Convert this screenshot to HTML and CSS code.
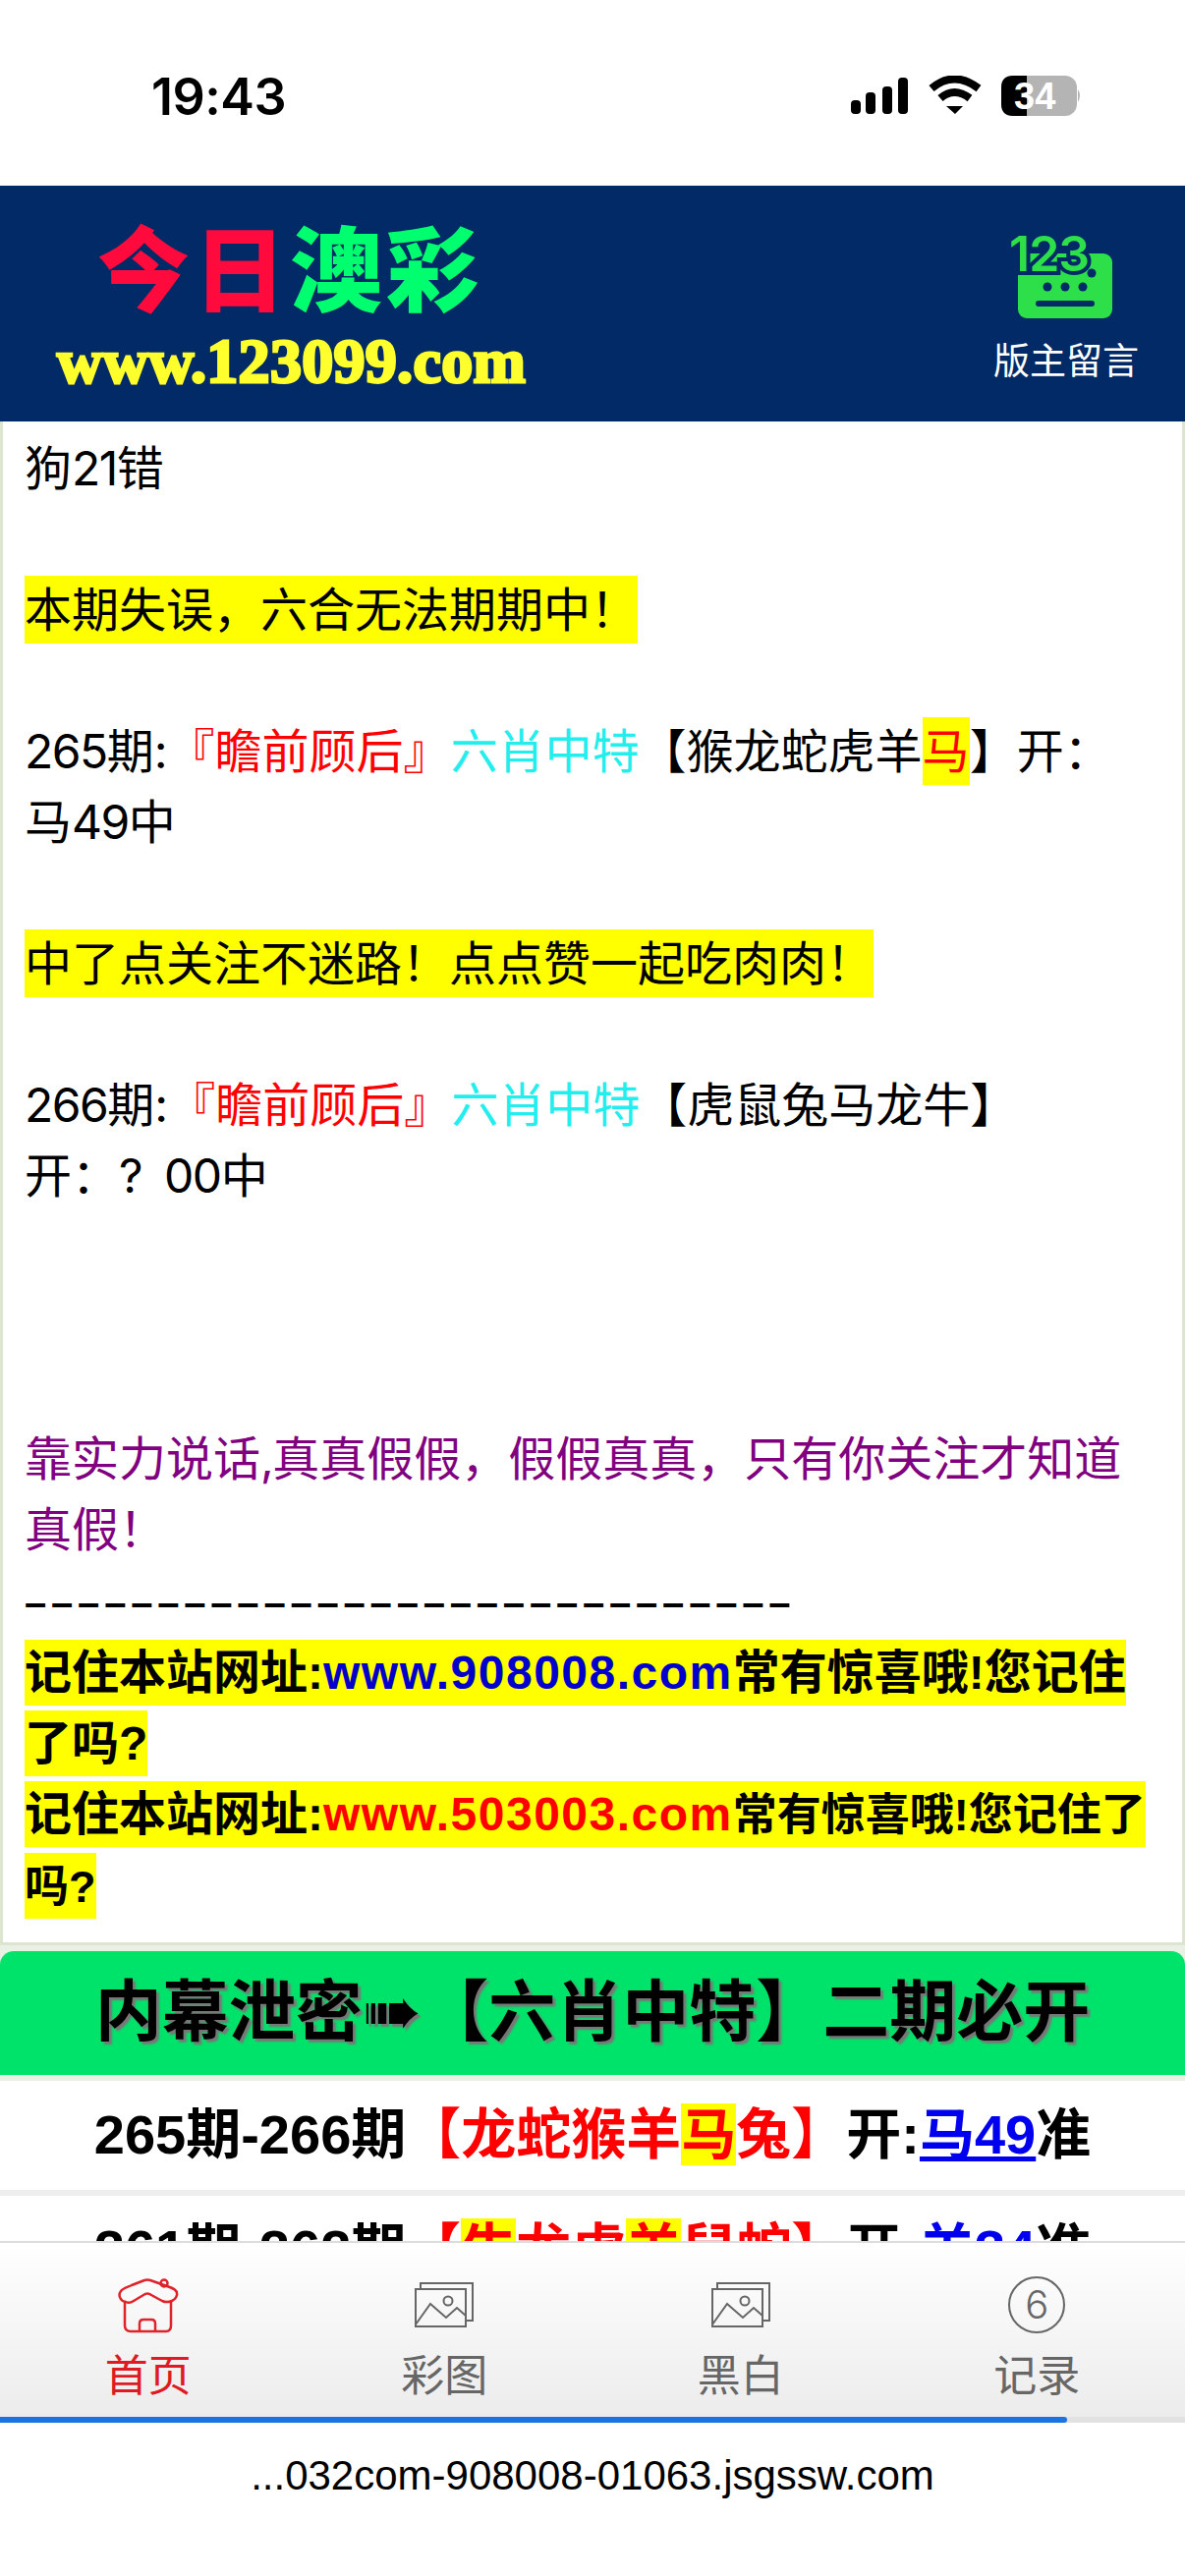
FILE: index.html
```html
<!doctype html>
<html lang="zh-CN">
<head>
    <meta charset="UTF-8">
    <title>今日澳彩</title>
    <link rel="stylesheet" href="styles.css">
</head>
<body>
<div class="status">
    <div class="time">19:43</div>
    <svg class="status-icons" width="236" height="44" viewBox="0 0 236 44">
        <rect x="1" y="25" width="10" height="14" rx="4" fill="#000"/>
        <rect x="16" y="17" width="10" height="22" rx="4" fill="#000"/>
        <rect x="33" y="11" width="10" height="28" rx="4" fill="#000"/>
        <rect x="49" y="2" width="10" height="37" rx="4" fill="#000"/>
        <path d="M83 13 Q106 -6 131 13 M92 23 Q106 11 122 23" fill="none" stroke="#000" stroke-width="8"/>
        <path d="M98 31 L115 31 L107 39 Z" fill="#000"/>
        <rect x="154" y="0" width="77" height="41" rx="12" fill="#b4b4b4"/>
        <path d="M166 0 H180 V41 H166 Q154 41 154 29 V12 Q154 0 166 0 Z" fill="#000"/>
        <path d="M232 14 Q236 20 232 27 Z" fill="#b4b4b4"/>
        <text x="167" y="34" class="batt">34</text>
    </svg>
</div>

<div class="header">
    <div class="logo">
        <div class="logo-name"><span class="logo-red">今日</span><span class="logo-green">澳彩</span></div>
        <div class="logo-url">www.123099.com</div>
    </div>
    <div class="board">
        <svg width="110" height="88" viewBox="0 0 110 88">
            <rect x="10" y="20" width="96" height="66" rx="9" fill="#2de04a"/>
            <circle cx="40" cy="54" r="4.500" fill="#012a66"/>
            <circle cx="58" cy="54" r="4.500" fill="#012a66"/>
            <circle cx="76" cy="54" r="4.500" fill="#012a66"/>
            <circle cx="85" cy="40" r="4.500" fill="#012a66"/>
            <rect x="28" y="68" width="60" height="6" rx="3" fill="#012a66"/>
            <text x="1" y="38" class="board-num">123</text>
        </svg>
        <div class="board-label">版主留言</div>
    </div>
</div>

<div class="main">
    <div class="post">
        狗<span class="num">21</span>错<br>
        <br>
        <span class="hl">本期失误，六合无法期期中！</span><br>
        <br>
        <span class="num">265</span>期:<span class="red">『瞻前顾后』</span><span class="cyan">六肖中特</span>【猴龙蛇虎羊<span class="hl red">马</span>】开：马<span class="num">49</span>中<br>
        <br>
        <span class="hl">中了点关注不迷路！点点赞一起吃肉肉！</span><br>
        <br>
        <span class="num">266</span>期:<span class="red">『瞻前顾后』</span><span class="cyan">六肖中特</span>【虎鼠兔马龙牛】<br>
        开：<span class="gap">?</span> <span class="num">00</span>中<br>
        <br>
        <br>
        <br>
        <span class="purple">靠实力说话<span class="num">,</span>真真假假，假假真真，只有你关注才知道真假！</span><br>
        <div class="note">
            <span class="dash">–––––––––––––––––––––––––––––</span><br>
            <span class="note-hl">记住本站网址:<span class="blue url-text">www.908008.com</span>常有惊喜哦!您记住了吗?</span><br>
            <span class="note-hl">记住本站网址:<span class="red url-text">www.503003.com</span><span class="tight">常有惊喜哦!您记住了吗?</span></span>
        </div>
    </div>
    <div class="banner">内幕泄密<span class="arrow">➠</span>【六肖中特】二期必开</div>
    <div class="row">265期-266期<span class="red">【龙蛇猴羊<span class="mark">马</span>兔】</span>开:<a class="link">马49</a>准</div>
    <div class="row">261期-262期<span class="red">【<span class="mark">牛</span>龙虎<span class="mark">羊</span>鼠蛇】</span>开:<a class="link">羊34</a>准</div>
</div>

<div class="tabs">
    <div class="tab active">
        <svg class="home" width="62" height="56" viewBox="0 0 62 56">
            <g fill="none" stroke="#e0222a" stroke-width="2.500" stroke-linejoin="round">
                <path d="M7 24 V48 Q7 54 13 54 H49 Q54 54 54 48 V24"/>
                <path d="M22 54 V46 Q22 42 26 42 H34 Q38 42 38 46 V54"/>
                <path d="M8 24 C2 23 0 17 3 13 C5 10 10 9 14 7 L27 2 Q30 1 33 2 L50 8 C56 10 61 12 60 17 C59 22 52 26 45 23 L34 17 Q30 14 26 17 L16 23 C13 25 10 25 8 24 Z"/>
                <circle cx="47" cy="5" r="3.500"/>
            </g>
        </svg>
        <span>首页</span>
    </div>
    <div class="tab">
        <svg width="60" height="46" viewBox="0 0 60 46">
            <g fill="none" stroke="#666" stroke-width="2">
                <path d="M6 7 V1 H59 V39 H52"/>
                <rect x="1" y="7" width="51" height="38"/>
                <path d="M1 43 L16 22 L32 36 L43 26 L52 34"/>
                <circle cx="34" cy="19" r="4.500"/>
            </g>
        </svg>
        <span>彩图</span>
    </div>
    <div class="tab">
        <svg width="60" height="46" viewBox="0 0 60 46">
            <g fill="none" stroke="#666" stroke-width="2">
                <path d="M6 7 V1 H59 V39 H52"/>
                <rect x="1" y="7" width="51" height="38"/>
                <path d="M1 43 L16 22 L32 36 L43 26 L52 34"/>
                <circle cx="34" cy="19" r="4.500"/>
            </g>
        </svg>
        <span>黑白</span>
    </div>
    <div class="tab">
        <div class="circle-six">6</div>
        <span>记录</span>
    </div>
</div>
<div class="progress"><div class="progress-bar"></div></div>
<div class="url">...032com-908008-01063.jsgssw.com</div>
</body>
</html>
```
FILE: styles.css
```css
*{
    padding: 0;
    margin: 0;
    box-sizing: border-box;
}
body{
    width: 1206px;
    height: 2622px;
    overflow: hidden;
    display: flex;
    flex-direction: column;
    background: #fff;
    color: #000;
    font-family: "Inter", "Noto Sans CJK SC", sans-serif;
}

/* status bar */
.status{
    height: 189px;
    flex: none;
    display: flex;
    justify-content: space-between;
    padding: 77px 105px 0 154px;
}
.time{
    font-size: 52px;
    font-weight: 600;
    line-height: 44px;
    letter-spacing: -0.5px;
}
.batt{
    font-family: "Liberation Sans", sans-serif;
    font-size: 38px;
    font-weight: 700;
    fill: #fff;
}

/* header */
.header{
    height: 240px;
    flex: none;
    background: #012a66;
    display: flex;
    justify-content: space-between;
    padding: 0 47px 0 58px;
}
.logo{
    padding-top: 27px;
}
.logo-name{
    font-family: "Noto Sans CJK SC", sans-serif;
    font-size: 94px;
    font-weight: 900;
    line-height: 106px;
    letter-spacing: 4px;
    padding-left: 41px;
}
.logo-red{
    color: #ff0a3c;
}
.logo-green{
    color: #00ff6e;
}
.logo-url{
    font-family: "Liberation Serif", serif;
    font-size: 64px;
    font-weight: 700;
    line-height: 58px;
    letter-spacing: 0.3px;
    color: #ffff2e;
    -webkit-text-stroke: 3px #ffff2e;
    margin-top: 17px;
}
.board{
    display: flex;
    flex-direction: column;
    align-items: center;
    padding-top: 49px;
}
.board svg{
    display: block;
    margin-left: -8px;
}
.board-num{
    font-family: "Inter", sans-serif;
    font-size: 50px;
    font-weight: 600;
    letter-spacing: -1px;
    fill: #2de04a;
    stroke: #012a66;
    stroke-width: 8px;
    paint-order: stroke;
}
.board-label{
    font-family: "Noto Sans CJK SC", sans-serif;
    font-size: 37px;
    line-height: 50px;
    color: #fff;
    margin-top: 14px;
}

/* page content, cut off by the tab bar */
.main{
    flex: 1;
    min-height: 0;
    overflow: hidden;
    background: #eaf0e3;
}
.post{
    background: #fff;
    border: 3px solid #dde5d0;
    border-top: 0;
    padding: 12px 27px 24px 22px;
    height: 1551px;
    font-size: 48px;
    line-height: 72px;
}
.num{
    letter-spacing: -1.5px;
}
.gap{
    margin-right: 8px;
}
.hl{
    background: #ffff00;
    padding: 5px 0;
}
.note{
    font-family: "Liberation Sans", "Noto Sans CJK SC", sans-serif;
    font-weight: 700;
}
.note-hl{
    background: #ffff00;
    padding: 7px 0;
}
.url-text{
    letter-spacing: 1.5px;
}
.tight{
    font-size: 45px;
}
.red{
    color: #ff0000;
}
.cyan{
    color: #22eeee;
}
.purple{
    color: #800080;
}
.blue{
    color: #0000cc;
}
.dash{
    font-size: 40px;
    letter-spacing: 4.8px;
}
.banner{
    margin-top: 6px;
    height: 126px;
    background: #00e36a;
    border-radius: 14px 14px 0 0;
    text-align: center;
    font-family: "Noto Sans CJK SC", sans-serif;
    font-size: 68px;
    font-weight: 700;
    line-height: 114px;
    white-space: nowrap;
    text-shadow: 3px 3px 2px #777;
}
.arrow{
    font-family: "DejaVu Sans", sans-serif;
    font-size: 72px;
}
.row{
    height: 111px;
    margin-top: 6px;
    background: #fff;
    text-align: center;
    font-family: "Liberation Sans", "Noto Sans CJK SC", sans-serif;
    font-size: 56px;
    font-weight: 700;
    line-height: 110px;
    white-space: nowrap;
}
.row + .row{
    margin-top: 0;
    height: 117px;
    border-top: 6px solid #eeeeee;
}
.mark{
    background: #ffff00;
}
.link{
    color: #0000ee;
    text-decoration: underline;
}

/* tab bar */
.tabs{
    height: 179px;
    flex: none;
    display: flex;
    border-top: 2px solid #dcdcdc;
    background: linear-gradient(#fff, #ececec);
    padding-top: 34px;
}
.tab{
    flex: 1;
    height: 127px;
    display: flex;
    flex-direction: column;
    align-items: center;
    justify-content: flex-end;
    font-family: "Noto Sans CJK SC", sans-serif;
    font-size: 44px;
    line-height: 58px;
    color: #666;
    position: relative;
}
.tab svg{
    position: absolute;
    top: 6px;
}
.tab svg.home{
    top: 2px;
}
.tab.active{
    color: #e01a22;
}
.circle-six{
    position: absolute;
    top: 0;
    width: 58px;
    height: 58px;
    border: 2px solid #666;
    border-radius: 50%;
    font-family: "Inter", sans-serif;
    font-size: 40px;
    font-weight: 300;
    line-height: 54px;
    text-align: center;
}

/* browser bar */
.progress{
    height: 6px;
    flex: none;
    background: #e2e2e2;
}
.progress-bar{
    width: 1086px;
    height: 6px;
    border-radius: 0 3px 3px 0;
    background: #1a73e0;
}
.url{
    height: 156px;
    flex: none;
    text-align: center;
    font-family: "Liberation Sans", sans-serif;
    font-size: 42px;
    line-height: 108px;
}
```
